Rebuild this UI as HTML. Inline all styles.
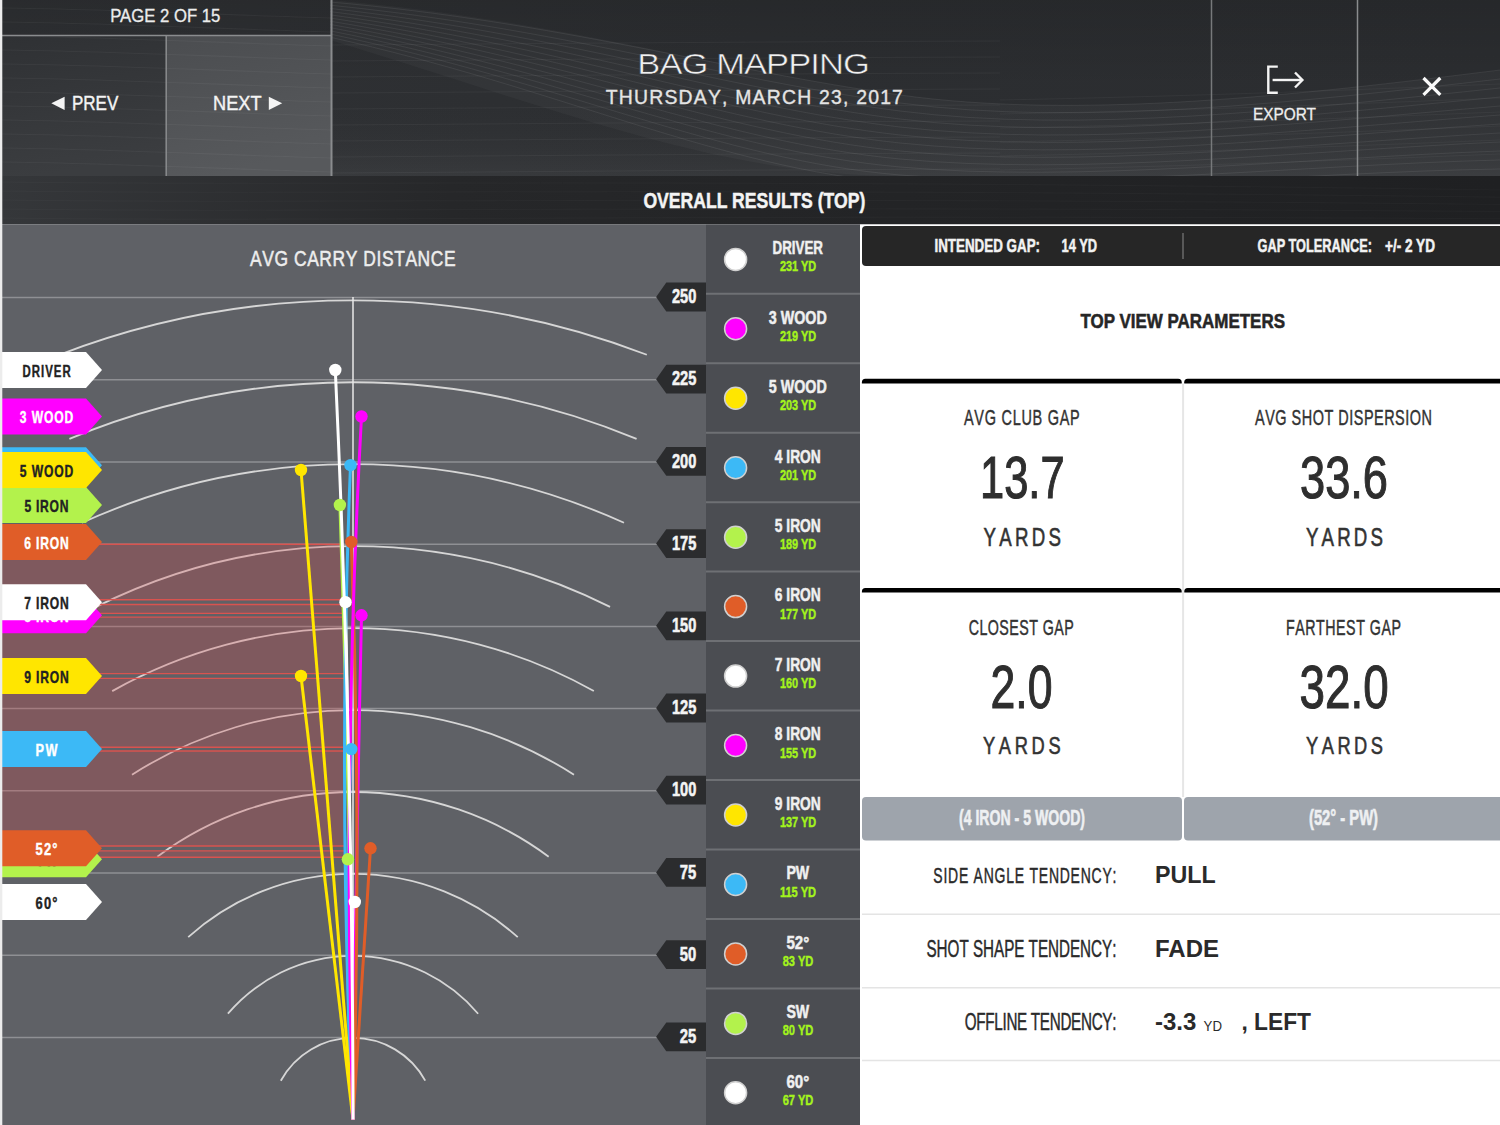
<!DOCTYPE html>
<html><head><meta charset="utf-8"><style>
html,body{margin:0;padding:0;width:1500px;height:1125px;overflow:hidden;background:#fff}
svg{display:block}
</style></head><body>
<svg width="1500" height="1125" viewBox="0 0 1500 1125">
<defs>
<linearGradient id="hdr" x1="0" y1="0" x2="1" y2="0">
<stop offset="0" stop-color="#2f3134"/><stop offset="0.5" stop-color="#2c2e31"/><stop offset="1" stop-color="#2b2d30"/></linearGradient>
<linearGradient id="hdrv" x1="0" y1="0" x2="0" y2="1">
<stop offset="0" stop-color="#000" stop-opacity="0.12"/><stop offset="0.5" stop-color="#000" stop-opacity="0.0"/><stop offset="1" stop-color="#fff" stop-opacity="0.05"/></linearGradient>
<linearGradient id="nextg" x1="0" y1="0" x2="0.3" y2="1">
<stop offset="0" stop-color="#4b4d50"/><stop offset="1" stop-color="#57595c"/></linearGradient>
<linearGradient id="prevg" x1="0" y1="0" x2="0.2" y2="1">
<stop offset="0" stop-color="#2f3134"/><stop offset="1" stop-color="#3b3d40"/></linearGradient>
<linearGradient id="subg" x1="0" y1="0" x2="1" y2="0">
<stop offset="0" stop-color="#35373a"/><stop offset="0.3" stop-color="#262729"/><stop offset="1" stop-color="#1f2022"/></linearGradient>
</defs>
<rect x="0" y="0" width="1500" height="176" fill="url(#hdr)" />
<rect x="0" y="0" width="1500" height="176" fill="url(#hdrv)" />
<path d="M330,0 C560,20 720,70 900,95 S1300,95 1500,70 V176 H900 C720,176 560,110 330,40 Z" fill="#fff" fill-opacity="0.03"/>
<path d="M330,2.0 C560,22.0 720,70.0 900,95.0 S1300,95.0 1500,70.0" fill="none" stroke="#fff" stroke-opacity="0.07" stroke-width="1"/>
<path d="M330,5.2 C560,28.0 720,79.0 900,103.0 S1300,102.0 1500,79.0" fill="none" stroke="#fff" stroke-opacity="0.07" stroke-width="1"/>
<path d="M330,8.4 C560,34.0 720,88.0 900,111.0 S1300,109.0 1500,88.0" fill="none" stroke="#fff" stroke-opacity="0.07" stroke-width="1"/>
<path d="M330,11.6 C560,40.0 720,97.0 900,119.0 S1300,116.0 1500,97.0" fill="none" stroke="#fff" stroke-opacity="0.07" stroke-width="1"/>
<path d="M330,14.8 C560,46.0 720,106.0 900,127.0 S1300,123.0 1500,106.0" fill="none" stroke="#fff" stroke-opacity="0.07" stroke-width="1"/>
<path d="M330,18.0 C560,52.0 720,115.0 900,135.0 S1300,130.0 1500,115.0" fill="none" stroke="#fff" stroke-opacity="0.07" stroke-width="1"/>
<path d="M330,21.2 C560,58.0 720,124.0 900,143.0 S1300,137.0 1500,124.0" fill="none" stroke="#fff" stroke-opacity="0.07" stroke-width="1"/>
<path d="M330,24.4 C560,64.0 720,133.0 900,151.0 S1300,144.0 1500,133.0" fill="none" stroke="#fff" stroke-opacity="0.07" stroke-width="1"/>
<path d="M330,27.6 C560,70.0 720,142.0 900,159.0 S1300,151.0 1500,142.0" fill="none" stroke="#fff" stroke-opacity="0.07" stroke-width="1"/>
<path d="M330,30.8 C560,76.0 720,151.0 900,167.0 S1300,158.0 1500,151.0" fill="none" stroke="#fff" stroke-opacity="0.07" stroke-width="1"/>
<path d="M330,34.0 C560,82.0 720,160.0 900,175.0 S1300,165.0 1500,160.0" fill="none" stroke="#fff" stroke-opacity="0.07" stroke-width="1"/>
<path d="M330,37.2 C560,88.0 720,169.0 900,183.0 S1300,172.0 1500,169.0" fill="none" stroke="#fff" stroke-opacity="0.07" stroke-width="1"/>
<path d="M330,45 C500,44 700,42 1000,41" fill="none" stroke="#fff" stroke-opacity="0.045" stroke-width="1"/>
<path d="M330,61 C500,60 700,58 1000,57" fill="none" stroke="#fff" stroke-opacity="0.045" stroke-width="1"/>
<path d="M330,77 C500,76 700,74 1000,73" fill="none" stroke="#fff" stroke-opacity="0.045" stroke-width="1"/>
<path d="M330,93 C500,92 700,90 1000,89" fill="none" stroke="#fff" stroke-opacity="0.045" stroke-width="1"/>
<path d="M330,109 C500,108 700,106 1000,105" fill="none" stroke="#fff" stroke-opacity="0.045" stroke-width="1"/>
<path d="M330,125 C500,124 700,122 1000,121" fill="none" stroke="#fff" stroke-opacity="0.045" stroke-width="1"/>
<path d="M330,141 C500,140 700,138 1000,137" fill="none" stroke="#fff" stroke-opacity="0.045" stroke-width="1"/>
<path d="M330,157 C500,156 700,154 1000,153" fill="none" stroke="#fff" stroke-opacity="0.045" stroke-width="1"/>
<path d="M330,173 C500,172 700,170 1000,169" fill="none" stroke="#fff" stroke-opacity="0.045" stroke-width="1"/>
<path d="M1000,100 C1200,96 1350,90 1500,84" fill="none" stroke="#fff" stroke-opacity="0.04" stroke-width="1"/>
<path d="M1000,114 C1200,110 1350,104 1500,98" fill="none" stroke="#fff" stroke-opacity="0.04" stroke-width="1"/>
<path d="M1000,128 C1200,124 1350,118 1500,112" fill="none" stroke="#fff" stroke-opacity="0.04" stroke-width="1"/>
<path d="M1000,142 C1200,138 1350,132 1500,126" fill="none" stroke="#fff" stroke-opacity="0.04" stroke-width="1"/>
<path d="M1000,156 C1200,152 1350,146 1500,140" fill="none" stroke="#fff" stroke-opacity="0.04" stroke-width="1"/>
<path d="M1000,170 C1200,166 1350,160 1500,154" fill="none" stroke="#fff" stroke-opacity="0.04" stroke-width="1"/>
<rect x="166" y="36" width="165" height="140" fill="url(#nextg)" />
<rect x="2" y="36" width="164" height="140" fill="url(#prevg)" />
<path d="M2,8 C100,9 200,14 331,18" fill="none" stroke="#fff" stroke-opacity="0.045" stroke-width="1.1"/>
<path d="M2,22 C100,23 200,28 331,32" fill="none" stroke="#fff" stroke-opacity="0.045" stroke-width="1.1"/>
<path d="M2,36 C100,37 200,42 331,46" fill="none" stroke="#fff" stroke-opacity="0.045" stroke-width="1.1"/>
<path d="M2,50 C100,51 200,56 331,60" fill="none" stroke="#fff" stroke-opacity="0.045" stroke-width="1.1"/>
<path d="M2,64 C100,65 200,70 331,74" fill="none" stroke="#fff" stroke-opacity="0.045" stroke-width="1.1"/>
<path d="M2,78 C100,79 200,84 331,88" fill="none" stroke="#fff" stroke-opacity="0.045" stroke-width="1.1"/>
<path d="M2,92 C100,93 200,98 331,102" fill="none" stroke="#fff" stroke-opacity="0.045" stroke-width="1.1"/>
<path d="M2,106 C100,107 200,112 331,116" fill="none" stroke="#fff" stroke-opacity="0.045" stroke-width="1.1"/>
<path d="M2,120 C100,121 200,126 331,130" fill="none" stroke="#fff" stroke-opacity="0.045" stroke-width="1.1"/>
<path d="M2,134 C100,135 200,140 331,144" fill="none" stroke="#fff" stroke-opacity="0.045" stroke-width="1.1"/>
<path d="M2,148 C100,149 200,154 331,158" fill="none" stroke="#fff" stroke-opacity="0.045" stroke-width="1.1"/>
<path d="M2,162 C100,163 200,168 331,172" fill="none" stroke="#fff" stroke-opacity="0.045" stroke-width="1.1"/>
<line x1="2" y1="35.5" x2="332" y2="35.5" stroke="#8a8c8e" stroke-width="1.5" />
<line x1="166.2" y1="36" x2="166.2" y2="176" stroke="#8a8c8e" stroke-width="1.5" />
<line x1="331.5" y1="0" x2="331.5" y2="176" stroke="#8a8c8e" stroke-width="2" />
<line x1="1211.5" y1="0" x2="1211.5" y2="176" stroke="#77797b" stroke-width="1.5" />
<line x1="1357.5" y1="0" x2="1357.5" y2="176" stroke="#8a8c8e" stroke-width="1.5" />
<text x="110.2" y="21.7" font-family="Liberation Sans" font-weight="normal" font-size="17.73" fill="#ececec" textLength="110.1" lengthAdjust="spacingAndGlyphs" stroke="#ececec" stroke-width="0.3">PAGE 2 OF 15</text>
<path d="M51.3,103.3 L64.6,96.7 L64.6,110 Z" fill="#f4f4f4"/>
<text x="72.0" y="110.0" font-family="Liberation Sans" font-weight="normal" font-size="19.33" fill="#f4f4f4" textLength="46.3" lengthAdjust="spacingAndGlyphs" stroke="#f4f4f4" stroke-width="0.4">PREV</text>
<text x="213.0" y="110.0" font-family="Liberation Sans" font-weight="normal" font-size="19.33" fill="#f4f4f4" textLength="48.5" lengthAdjust="spacingAndGlyphs" stroke="#f4f4f4" stroke-width="0.4">NEXT</text>
<path d="M282.2,103.3 L268.8,96.7 L268.8,110 Z" fill="#f4f4f4"/>
<g transform="translate(637.3,74.1) scale(1.2,1)"><text x="0.00 18.43 36.86 58.48 65.71 88.91 107.34 125.77 144.20 151.43 171.45" y="0" font-family="Liberation Sans" font-weight="normal" font-size="28.78" fill="#f0f0f0" stroke="#2c2e31" stroke-width="0.5">BAG MAPPING</text></g>
<g transform="translate(605.8,103.8) scale(0.98,1)"><text x="0.00 13.31 28.83 44.35 59.86 74.29 89.81 104.23 118.66 125.39 132.12 149.83 164.26 179.77 195.29 210.81 217.54 229.77 242.01 248.74 255.47 267.70 279.94 292.17" y="0" font-family="Liberation Sans" font-weight="normal" font-size="19.77" fill="#e4e4e4" stroke="#e4e4e4" stroke-width="0.35">THURSDAY, MARCH 23, 2017</text></g>
<path d="M1277.8,66.6 H1268.3 V92.8 H1277.8" fill="none" stroke="#f4f4f4" stroke-width="2.4"/>
<path d="M1272.6,80 H1302" fill="none" stroke="#f4f4f4" stroke-width="2.4"/>
<path d="M1295,72.5 L1302.4,80 L1295,87.5" fill="none" stroke="#f4f4f4" stroke-width="2.4"/>
<text x="1252.9" y="120.1" font-family="Liberation Sans" font-weight="normal" font-size="16.57" fill="#eeeeee" textLength="63.1" lengthAdjust="spacingAndGlyphs" stroke="#eeeeee" stroke-width="0.3">EXPORT</text>
<path d="M1423.5,78 L1440.3,94.8 M1440.3,78 L1423.5,94.8" stroke="#fafafa" stroke-width="3.2"/>
<rect x="0" y="176" width="1500" height="48.5" fill="url(#subg)" />
<path d="M0,182 C300,186 700,178 1500,190.0" fill="none" stroke="#fff" stroke-opacity="0.025" stroke-width="1"/>
<path d="M0,191 C300,195 700,187 1500,197.2" fill="none" stroke="#fff" stroke-opacity="0.025" stroke-width="1"/>
<path d="M0,200 C300,204 700,196 1500,204.4" fill="none" stroke="#fff" stroke-opacity="0.025" stroke-width="1"/>
<path d="M0,209 C300,213 700,205 1500,211.6" fill="none" stroke="#fff" stroke-opacity="0.025" stroke-width="1"/>
<path d="M0,218 C300,222 700,214 1500,218.8" fill="none" stroke="#fff" stroke-opacity="0.025" stroke-width="1"/>
<text x="643.4" y="207.7" font-family="Liberation Sans" font-weight="bold" font-size="22.67" fill="#f4f4f4" textLength="221.9" lengthAdjust="spacingAndGlyphs" stroke="#f4f4f4" stroke-width="0.5">OVERALL RESULTS (TOP)</text>
<rect x="0" y="224.5" width="706" height="901" fill="#5f6166" />
<line x1="2" y1="1037.3999999999999" x2="660" y2="1037.3999999999999" stroke="#ffffff" stroke-width="1.5" stroke-opacity="0.3"/>
<line x1="2" y1="955.1999999999999" x2="660" y2="955.1999999999999" stroke="#ffffff" stroke-width="1.5" stroke-opacity="0.3"/>
<line x1="2" y1="872.9999999999999" x2="660" y2="872.9999999999999" stroke="#ffffff" stroke-width="1.5" stroke-opacity="0.3"/>
<line x1="2" y1="790.8" x2="660" y2="790.8" stroke="#ffffff" stroke-width="1.5" stroke-opacity="0.3"/>
<line x1="2" y1="708.5999999999999" x2="660" y2="708.5999999999999" stroke="#ffffff" stroke-width="1.5" stroke-opacity="0.3"/>
<line x1="2" y1="626.3999999999999" x2="660" y2="626.3999999999999" stroke="#ffffff" stroke-width="1.5" stroke-opacity="0.3"/>
<line x1="2" y1="544.1999999999999" x2="660" y2="544.1999999999999" stroke="#ffffff" stroke-width="1.5" stroke-opacity="0.3"/>
<line x1="2" y1="461.9999999999999" x2="660" y2="461.9999999999999" stroke="#ffffff" stroke-width="1.5" stroke-opacity="0.3"/>
<line x1="2" y1="379.79999999999984" x2="660" y2="379.79999999999984" stroke="#ffffff" stroke-width="1.5" stroke-opacity="0.3"/>
<line x1="2" y1="297.5999999999999" x2="660" y2="297.5999999999999" stroke="#ffffff" stroke-width="1.5" stroke-opacity="0.3"/>
<path d="M280.8,1080.7 A82.35,82.35 0 0 1 425.23,1080.65" fill="none" stroke="#d6d6d6" stroke-width="1.8"/>
<path d="M227.9,1013.7 A164.30,164.30 0 0 1 478.12,1013.71" fill="none" stroke="#d6d6d6" stroke-width="1.8"/>
<path d="M188.2,937.2 A246.25,246.25 0 0 1 517.77,937.20" fill="none" stroke="#d6d6d6" stroke-width="1.8"/>
<path d="M157.3,856.7 A328.20,328.20 0 0 1 548.68,856.72" fill="none" stroke="#d6d6d6" stroke-width="1.8"/>
<path d="M132.0,774.7 A410.15,410.15 0 0 1 573.98,774.67" fill="none" stroke="#d6d6d6" stroke-width="1.8"/>
<path d="M112.2,691.1 A492.10,492.10 0 0 1 593.83,691.05" fill="none" stroke="#d6d6d6" stroke-width="1.8"/>
<path d="M96.0,606.9 A574.05,574.05 0 0 1 610.04,606.91" fill="none" stroke="#d6d6d6" stroke-width="1.8"/>
<path d="M82.0,522.8 A656.00,656.00 0 0 1 624.00,522.79" fill="none" stroke="#d6d6d6" stroke-width="1.8"/>
<path d="M69.4,438.9 A737.95,737.95 0 0 1 636.59,438.92" fill="none" stroke="#d6d6d6" stroke-width="1.8"/>
<path d="M59.2,354.8 A819.90,819.90 0 0 1 646.83,354.76" fill="none" stroke="#d6d6d6" stroke-width="1.8"/>
<line x1="353" y1="297" x2="353" y2="1119.6" stroke="#e8e8e8" stroke-width="1.5" />
<rect x="2" y="544.2" width="342" height="55.59999999999991" fill="#dc464b" fill-opacity="0.26"/>
<line x1="2" y1="544.2" x2="344" y2="544.2" stroke="#d9534f" stroke-width="1.4" />
<line x1="2" y1="599.8" x2="344" y2="599.8" stroke="#d9534f" stroke-width="1.4" />
<rect x="2" y="604.5" width="342" height="8.899999999999977" fill="#dc464b" fill-opacity="0.26"/>
<line x1="2" y1="604.5" x2="344" y2="604.5" stroke="#d9534f" stroke-width="1.4" />
<line x1="2" y1="613.4" x2="344" y2="613.4" stroke="#d9534f" stroke-width="1.4" />
<rect x="2" y="617.1" width="342" height="56.5" fill="#dc464b" fill-opacity="0.26"/>
<line x1="2" y1="617.1" x2="344" y2="617.1" stroke="#d9534f" stroke-width="1.4" />
<line x1="2" y1="673.6" x2="344" y2="673.6" stroke="#d9534f" stroke-width="1.4" />
<rect x="2" y="678.4" width="342" height="68.80000000000007" fill="#dc464b" fill-opacity="0.26"/>
<line x1="2" y1="678.4" x2="344" y2="678.4" stroke="#d9534f" stroke-width="1.4" />
<line x1="2" y1="747.2" x2="344" y2="747.2" stroke="#d9534f" stroke-width="1.4" />
<rect x="2" y="751.0" width="342" height="95.0" fill="#dc464b" fill-opacity="0.26"/>
<line x1="2" y1="751.0" x2="344" y2="751.0" stroke="#d9534f" stroke-width="1.4" />
<line x1="2" y1="846.0" x2="344" y2="846.0" stroke="#d9534f" stroke-width="1.4" />
<rect x="2" y="850.9" width="342" height="6.399999999999977" fill="#dc464b" fill-opacity="0.26"/>
<line x1="2" y1="850.9" x2="344" y2="850.9" stroke="#d9534f" stroke-width="1.4" />
<line x1="2" y1="857.3" x2="344" y2="857.3" stroke="#d9534f" stroke-width="1.4" />
<g transform="translate(250.0,265.7) scale(0.765,1)"><text x="0.00 15.96 31.93 50.42 57.50 74.72 90.69 107.91 125.13 141.10 148.18 165.40 172.48 188.45 203.13 219.09 236.31 253.54" y="0" font-family="Liberation Sans" font-weight="normal" font-size="22.82" fill="#ededed" stroke="#ededed" stroke-width="0.55">AVG CARRY DISTANCE</text></g>
<path d="M656.1,1036.8 L666.3,1022.4 H706 V1051.2 H666.3 Z" fill="#2b2c2e"/>
<text x="679.8" y="1043.0" font-family="Liberation Sans" font-weight="bold" font-size="19.48" fill="#f4f4f4" textLength="16.5" lengthAdjust="spacingAndGlyphs"  stroke="#f4f4f4" stroke-width="0.55">25</text>
<path d="M656.1,954.6 L666.3,940.2 H706 V969.0 H666.3 Z" fill="#2b2c2e"/>
<text x="679.8" y="960.8" font-family="Liberation Sans" font-weight="bold" font-size="19.48" fill="#f4f4f4" textLength="16.5" lengthAdjust="spacingAndGlyphs"  stroke="#f4f4f4" stroke-width="0.55">50</text>
<path d="M656.1,872.4 L666.3,858.0 H706 V886.8 H666.3 Z" fill="#2b2c2e"/>
<text x="679.8" y="878.6" font-family="Liberation Sans" font-weight="bold" font-size="19.48" fill="#f4f4f4" textLength="16.5" lengthAdjust="spacingAndGlyphs"  stroke="#f4f4f4" stroke-width="0.55">75</text>
<path d="M656.1,790.2 L666.3,775.8 H706 V804.6 H666.3 Z" fill="#2b2c2e"/>
<text x="671.9" y="796.4" font-family="Liberation Sans" font-weight="bold" font-size="19.48" fill="#f4f4f4" textLength="24.4" lengthAdjust="spacingAndGlyphs"  stroke="#f4f4f4" stroke-width="0.55">100</text>
<path d="M656.1,708.0 L666.3,693.6 H706 V722.4 H666.3 Z" fill="#2b2c2e"/>
<text x="671.9" y="714.2" font-family="Liberation Sans" font-weight="bold" font-size="19.48" fill="#f4f4f4" textLength="24.4" lengthAdjust="spacingAndGlyphs"  stroke="#f4f4f4" stroke-width="0.55">125</text>
<path d="M656.1,625.8 L666.3,611.4 H706 V640.2 H666.3 Z" fill="#2b2c2e"/>
<text x="671.9" y="632.0" font-family="Liberation Sans" font-weight="bold" font-size="19.48" fill="#f4f4f4" textLength="24.4" lengthAdjust="spacingAndGlyphs"  stroke="#f4f4f4" stroke-width="0.55">150</text>
<path d="M656.1,543.6 L666.3,529.2 H706 V558.0 H666.3 Z" fill="#2b2c2e"/>
<text x="671.9" y="549.8" font-family="Liberation Sans" font-weight="bold" font-size="19.48" fill="#f4f4f4" textLength="24.4" lengthAdjust="spacingAndGlyphs"  stroke="#f4f4f4" stroke-width="0.55">175</text>
<path d="M656.1,461.4 L666.3,447.0 H706 V475.8 H666.3 Z" fill="#2b2c2e"/>
<text x="671.9" y="467.6" font-family="Liberation Sans" font-weight="bold" font-size="19.48" fill="#f4f4f4" textLength="24.4" lengthAdjust="spacingAndGlyphs"  stroke="#f4f4f4" stroke-width="0.55">200</text>
<path d="M656.1,379.2 L666.3,364.8 H706 V393.6 H666.3 Z" fill="#2b2c2e"/>
<text x="671.9" y="385.4" font-family="Liberation Sans" font-weight="bold" font-size="19.48" fill="#f4f4f4" textLength="24.4" lengthAdjust="spacingAndGlyphs"  stroke="#f4f4f4" stroke-width="0.55">225</text>
<path d="M656.1,297.0 L666.3,282.6 H706 V311.4 H666.3 Z" fill="#2b2c2e"/>
<text x="671.9" y="303.2" font-family="Liberation Sans" font-weight="bold" font-size="19.48" fill="#f4f4f4" textLength="24.4" lengthAdjust="spacingAndGlyphs"  stroke="#f4f4f4" stroke-width="0.55">250</text>
<path d="M353,1119.6 Q353.9,1010.8 354.8,902" fill="none" stroke="#ffffff" stroke-width="3"/>
<path d="M353,1119.6 Q350.45,989.4 347.9,859.3" fill="none" stroke="#b3f24c" stroke-width="3"/>
<path d="M353,1119.6 Q361.75,983.9 370.5,848.3" fill="none" stroke="#e05d28" stroke-width="3"/>
<path d="M353,1119.6 Q342.5,934.3 351.3,749.1" fill="none" stroke="#3cb9f6" stroke-width="3"/>
<path d="M353,1119.6 Q327.0,897.8 301,676" fill="none" stroke="#ffe600" stroke-width="3"/>
<path d="M353,1119.6 Q355.9,867.4 361.5,615.3" fill="none" stroke="#ff00ff" stroke-width="3"/>
<path d="M353,1119.6 Q350.6,860.9 345.5,602.2" fill="none" stroke="#ffffff" stroke-width="3"/>
<path d="M353,1119.6 Q361.8,830.8 351.3,542" fill="none" stroke="#e05d28" stroke-width="3"/>
<path d="M353,1119.6 Q350.5,812.3 339.9,505" fill="none" stroke="#b3f24c" stroke-width="3"/>
<path d="M353,1119.6 Q337.3,792.4 350.5,465.2" fill="none" stroke="#3cb9f6" stroke-width="3"/>
<path d="M353,1119.6 Q327.0,794.8 301,470" fill="none" stroke="#ffe600" stroke-width="3"/>
<path d="M353,1119.6 Q342.3,768.0 361.5,416.5" fill="none" stroke="#ff00ff" stroke-width="3"/>
<path d="M353,1119.6 Q352.7,744.8 335.3,370" fill="none" stroke="#ffffff" stroke-width="3"/>
<circle cx="335.3" cy="370" r="6.2" fill="#ffffff"/>
<circle cx="361.5" cy="416.5" r="6.2" fill="#ff00ff"/>
<circle cx="301" cy="470" r="6.2" fill="#ffe600"/>
<circle cx="350.5" cy="465.2" r="6.2" fill="#3cb9f6"/>
<circle cx="339.9" cy="505" r="6.2" fill="#b3f24c"/>
<circle cx="351.3" cy="542" r="6.2" fill="#e05d28"/>
<circle cx="345.5" cy="602.2" r="6.2" fill="#ffffff"/>
<circle cx="361.5" cy="615.3" r="6.2" fill="#ff00ff"/>
<circle cx="301" cy="676" r="6.2" fill="#ffe600"/>
<circle cx="351.3" cy="749.1" r="6.2" fill="#3cb9f6"/>
<circle cx="370.5" cy="848.3" r="6.2" fill="#e05d28"/>
<circle cx="347.9" cy="859.3" r="6.2" fill="#b3f24c"/>
<circle cx="354.8" cy="902" r="6.2" fill="#ffffff"/>
<path d="M2,884.0 H86 L102,902.0 L86,920.0 H2 Z" fill="#ffffff"/>
<g transform="translate(35.5,908.6) scale(0.8,1)"><text x="0.00 10.52 21.05" y="0" font-family="Liberation Sans" font-weight="bold" font-size="16.13" fill="#222" stroke="#222" stroke-width="0.4">60°</text></g>
<path d="M2,841.3 H86 L102,859.3 L86,877.3 H2 Z" fill="#b3f24c"/>
<g transform="translate(35.5,865.9) scale(0.79,1)"><text x="0.00 12.62" y="0" font-family="Liberation Sans" font-weight="bold" font-size="16.13" fill="#222" stroke="#222" stroke-width="0.4">SW</text></g>
<path d="M2,830.3 H86 L102,848.3 L86,866.3 H2 Z" fill="#e05d28"/>
<g transform="translate(35.5,854.9) scale(0.8,1)"><text x="0.00 10.52 21.05" y="0" font-family="Liberation Sans" font-weight="bold" font-size="16.13" fill="#fff" stroke="#fff" stroke-width="0.4">52°</text></g>
<path d="M2,731.1 H86 L102,749.1 L86,767.1 H2 Z" fill="#3cb9f6"/>
<g transform="translate(35.5,755.7) scale(0.79,1)"><text x="0.00 12.62" y="0" font-family="Liberation Sans" font-weight="bold" font-size="16.13" fill="#fff" stroke="#fff" stroke-width="0.4">PW</text></g>
<path d="M2,658.0 H86 L102,676.0 L86,694.0 H2 Z" fill="#ffe600"/>
<g transform="translate(24.2,682.6) scale(0.75,1)"><text x="0.00 10.08 15.67 21.26 34.02 47.68" y="0" font-family="Liberation Sans" font-weight="bold" font-size="16.13" fill="#222" stroke="#222" stroke-width="0.4">9 IRON</text></g>
<path d="M2,597.3 H86 L102,615.3 L86,633.3 H2 Z" fill="#ff00ff"/>
<g transform="translate(24.2,621.9) scale(0.75,1)"><text x="0.00 10.08 15.67 21.26 34.02 47.68" y="0" font-family="Liberation Sans" font-weight="bold" font-size="16.13" fill="#fff" stroke="#fff" stroke-width="0.4">8 IRON</text></g>
<path d="M2,584.2 H86 L102,602.2 L86,620.2 H2 Z" fill="#ffffff"/>
<g transform="translate(24.2,608.8) scale(0.75,1)"><text x="0.00 10.08 15.67 21.26 34.02 47.68" y="0" font-family="Liberation Sans" font-weight="bold" font-size="16.13" fill="#222" stroke="#222" stroke-width="0.4">7 IRON</text></g>
<path d="M2,524.0 H86 L102,542.0 L86,560.0 H2 Z" fill="#e05d28"/>
<g transform="translate(24.2,548.6) scale(0.75,1)"><text x="0.00 10.08 15.67 21.26 34.02 47.68" y="0" font-family="Liberation Sans" font-weight="bold" font-size="16.13" fill="#fff" stroke="#fff" stroke-width="0.4">6 IRON</text></g>
<path d="M2,487.0 H86 L102,505.0 L86,523.0 H2 Z" fill="#b3f24c"/>
<g transform="translate(24.4,511.6) scale(0.75,1)"><text x="0.00 9.97 15.46 20.94 33.60 47.15" y="0" font-family="Liberation Sans" font-weight="bold" font-size="16.13" fill="#222" stroke="#222" stroke-width="0.4">5 IRON</text></g>
<path d="M2,447.2 H86 L102,465.2 L86,483.2 H2 Z" fill="#3cb9f6"/>
<g transform="translate(24.2,471.8) scale(0.75,1)"><text x="0.00 10.08 15.67 21.26 34.02 47.68" y="0" font-family="Liberation Sans" font-weight="bold" font-size="16.13" fill="#fff" stroke="#fff" stroke-width="0.4">4 IRON</text></g>
<path d="M2,452.0 H86 L102,470.0 L86,488.0 H2 Z" fill="#ffe600"/>
<g transform="translate(19.8,476.6) scale(0.75,1)"><text x="0.00 10.15 15.81 32.22 45.95 59.68" y="0" font-family="Liberation Sans" font-weight="bold" font-size="16.13" fill="#222" stroke="#222" stroke-width="0.4">5 WOOD</text></g>
<path d="M2,398.5 H86 L102,416.5 L86,434.5 H2 Z" fill="#ff00ff"/>
<g transform="translate(19.8,423.1) scale(0.75,1)"><text x="0.00 10.15 15.81 32.22 45.95 59.68" y="0" font-family="Liberation Sans" font-weight="bold" font-size="16.13" fill="#fff" stroke="#fff" stroke-width="0.4">3 WOOD</text></g>
<path d="M2,352.0 H86 L102,370.0 L86,388.0 H2 Z" fill="#ffffff"/>
<g transform="translate(22.4,376.6) scale(0.71,1)"><text x="0.00 13.07 26.13 32.03 44.20 56.38" y="0" font-family="Liberation Sans" font-weight="bold" font-size="16.13" fill="#222" stroke="#222" stroke-width="0.4">DRIVER</text></g>
<rect x="706" y="224.5" width="154" height="901" fill="#4b4d52" />
<line x1="706" y1="293.7" x2="860" y2="293.7" stroke="#6e7074" stroke-width="2" />
<line x1="706" y1="363.18" x2="860" y2="363.18" stroke="#6e7074" stroke-width="2" />
<line x1="706" y1="432.65999999999997" x2="860" y2="432.65999999999997" stroke="#6e7074" stroke-width="2" />
<line x1="706" y1="502.14" x2="860" y2="502.14" stroke="#6e7074" stroke-width="2" />
<line x1="706" y1="571.62" x2="860" y2="571.62" stroke="#6e7074" stroke-width="2" />
<line x1="706" y1="641.1" x2="860" y2="641.1" stroke="#6e7074" stroke-width="2" />
<line x1="706" y1="710.5799999999999" x2="860" y2="710.5799999999999" stroke="#6e7074" stroke-width="2" />
<line x1="706" y1="780.06" x2="860" y2="780.06" stroke="#6e7074" stroke-width="2" />
<line x1="706" y1="849.54" x2="860" y2="849.54" stroke="#6e7074" stroke-width="2" />
<line x1="706" y1="919.02" x2="860" y2="919.02" stroke="#6e7074" stroke-width="2" />
<line x1="706" y1="988.5" x2="860" y2="988.5" stroke="#6e7074" stroke-width="2" />
<line x1="706" y1="1057.98" x2="860" y2="1057.98" stroke="#6e7074" stroke-width="2" />
<circle cx="735.6" cy="259.4" r="11" fill="#ffffff" stroke="#d0d0d0" stroke-width="1.5"/>
<text x="772.6" y="254.2" font-family="Liberation Sans" font-weight="bold" font-size="17.73" fill="#f0f0f0" textLength="50.4" lengthAdjust="spacingAndGlyphs"  stroke="#f0f0f0" stroke-width="0.50">DRIVER</text>
<text x="779.9" y="271.4" font-family="Liberation Sans" font-weight="bold" font-size="14.83" fill="#a4f41c" textLength="36.2" lengthAdjust="spacingAndGlyphs"  stroke="#a4f41c" stroke-width="0.42">231 YD</text>
<circle cx="735.6" cy="328.8" r="11" fill="#ff00ff" stroke="#d0d0d0" stroke-width="1.5"/>
<text x="768.8" y="323.6" font-family="Liberation Sans" font-weight="bold" font-size="17.73" fill="#f0f0f0" textLength="58.0" lengthAdjust="spacingAndGlyphs"  stroke="#f0f0f0" stroke-width="0.50">3 WOOD</text>
<text x="779.9" y="340.8" font-family="Liberation Sans" font-weight="bold" font-size="14.83" fill="#a4f41c" textLength="36.2" lengthAdjust="spacingAndGlyphs"  stroke="#a4f41c" stroke-width="0.42">219 YD</text>
<circle cx="735.6" cy="398.3" r="11" fill="#ffe600" stroke="#d0d0d0" stroke-width="1.5"/>
<text x="768.8" y="393.1" font-family="Liberation Sans" font-weight="bold" font-size="17.73" fill="#f0f0f0" textLength="58.0" lengthAdjust="spacingAndGlyphs"  stroke="#f0f0f0" stroke-width="0.50">5 WOOD</text>
<text x="779.9" y="410.3" font-family="Liberation Sans" font-weight="bold" font-size="14.83" fill="#a4f41c" textLength="36.2" lengthAdjust="spacingAndGlyphs"  stroke="#a4f41c" stroke-width="0.42">203 YD</text>
<circle cx="735.6" cy="467.8" r="11" fill="#3cb9f6" stroke="#d0d0d0" stroke-width="1.5"/>
<text x="774.8" y="462.6" font-family="Liberation Sans" font-weight="bold" font-size="17.73" fill="#f0f0f0" textLength="46.0" lengthAdjust="spacingAndGlyphs"  stroke="#f0f0f0" stroke-width="0.50">4 IRON</text>
<text x="779.9" y="479.8" font-family="Liberation Sans" font-weight="bold" font-size="14.83" fill="#a4f41c" textLength="36.2" lengthAdjust="spacingAndGlyphs"  stroke="#a4f41c" stroke-width="0.42">201 YD</text>
<circle cx="735.6" cy="537.2" r="11" fill="#b3f24c" stroke="#d0d0d0" stroke-width="1.5"/>
<text x="774.8" y="532.0" font-family="Liberation Sans" font-weight="bold" font-size="17.73" fill="#f0f0f0" textLength="46.0" lengthAdjust="spacingAndGlyphs"  stroke="#f0f0f0" stroke-width="0.50">5 IRON</text>
<text x="779.9" y="549.2" font-family="Liberation Sans" font-weight="bold" font-size="14.83" fill="#a4f41c" textLength="36.2" lengthAdjust="spacingAndGlyphs"  stroke="#a4f41c" stroke-width="0.42">189 YD</text>
<circle cx="735.6" cy="606.6" r="11" fill="#e05d28" stroke="#d0d0d0" stroke-width="1.5"/>
<text x="774.8" y="601.4" font-family="Liberation Sans" font-weight="bold" font-size="17.73" fill="#f0f0f0" textLength="46.0" lengthAdjust="spacingAndGlyphs"  stroke="#f0f0f0" stroke-width="0.50">6 IRON</text>
<text x="779.9" y="618.6" font-family="Liberation Sans" font-weight="bold" font-size="14.83" fill="#a4f41c" textLength="36.2" lengthAdjust="spacingAndGlyphs"  stroke="#a4f41c" stroke-width="0.42">177 YD</text>
<circle cx="735.6" cy="676.1" r="11" fill="#ffffff" stroke="#d0d0d0" stroke-width="1.5"/>
<text x="774.8" y="670.9" font-family="Liberation Sans" font-weight="bold" font-size="17.73" fill="#f0f0f0" textLength="46.0" lengthAdjust="spacingAndGlyphs"  stroke="#f0f0f0" stroke-width="0.50">7 IRON</text>
<text x="779.9" y="688.1" font-family="Liberation Sans" font-weight="bold" font-size="14.83" fill="#a4f41c" textLength="36.2" lengthAdjust="spacingAndGlyphs"  stroke="#a4f41c" stroke-width="0.42">160 YD</text>
<circle cx="735.6" cy="745.5" r="11" fill="#ff00ff" stroke="#d0d0d0" stroke-width="1.5"/>
<text x="774.8" y="740.3" font-family="Liberation Sans" font-weight="bold" font-size="17.73" fill="#f0f0f0" textLength="46.0" lengthAdjust="spacingAndGlyphs"  stroke="#f0f0f0" stroke-width="0.50">8 IRON</text>
<text x="779.9" y="757.5" font-family="Liberation Sans" font-weight="bold" font-size="14.83" fill="#a4f41c" textLength="36.2" lengthAdjust="spacingAndGlyphs"  stroke="#a4f41c" stroke-width="0.42">155 YD</text>
<circle cx="735.6" cy="815.0" r="11" fill="#ffe600" stroke="#d0d0d0" stroke-width="1.5"/>
<text x="774.8" y="809.8" font-family="Liberation Sans" font-weight="bold" font-size="17.73" fill="#f0f0f0" textLength="46.0" lengthAdjust="spacingAndGlyphs"  stroke="#f0f0f0" stroke-width="0.50">9 IRON</text>
<text x="779.9" y="827.0" font-family="Liberation Sans" font-weight="bold" font-size="14.83" fill="#a4f41c" textLength="36.2" lengthAdjust="spacingAndGlyphs"  stroke="#a4f41c" stroke-width="0.42">137 YD</text>
<circle cx="735.6" cy="884.5" r="11" fill="#3cb9f6" stroke="#d0d0d0" stroke-width="1.5"/>
<text x="786.4" y="879.2" font-family="Liberation Sans" font-weight="bold" font-size="17.73" fill="#f0f0f0" textLength="22.8" lengthAdjust="spacingAndGlyphs"  stroke="#f0f0f0" stroke-width="0.50">PW</text>
<text x="779.9" y="896.5" font-family="Liberation Sans" font-weight="bold" font-size="14.83" fill="#a4f41c" textLength="36.2" lengthAdjust="spacingAndGlyphs"  stroke="#a4f41c" stroke-width="0.42">115 YD</text>
<circle cx="735.6" cy="953.9" r="11" fill="#e05d28" stroke="#d0d0d0" stroke-width="1.5"/>
<text x="786.4" y="948.7" font-family="Liberation Sans" font-weight="bold" font-size="17.73" fill="#f0f0f0" textLength="22.8" lengthAdjust="spacingAndGlyphs"  stroke="#f0f0f0" stroke-width="0.50">52°</text>
<text x="782.7" y="965.9" font-family="Liberation Sans" font-weight="bold" font-size="14.83" fill="#a4f41c" textLength="30.6" lengthAdjust="spacingAndGlyphs"  stroke="#a4f41c" stroke-width="0.42">83 YD</text>
<circle cx="735.6" cy="1023.4" r="11" fill="#b3f24c" stroke="#d0d0d0" stroke-width="1.5"/>
<text x="786.4" y="1018.1" font-family="Liberation Sans" font-weight="bold" font-size="17.73" fill="#f0f0f0" textLength="22.8" lengthAdjust="spacingAndGlyphs"  stroke="#f0f0f0" stroke-width="0.50">SW</text>
<text x="782.7" y="1035.3" font-family="Liberation Sans" font-weight="bold" font-size="14.83" fill="#a4f41c" textLength="30.6" lengthAdjust="spacingAndGlyphs"  stroke="#a4f41c" stroke-width="0.42">80 YD</text>
<circle cx="735.6" cy="1092.8" r="11" fill="#ffffff" stroke="#d0d0d0" stroke-width="1.5"/>
<text x="786.4" y="1087.6" font-family="Liberation Sans" font-weight="bold" font-size="17.73" fill="#f0f0f0" textLength="22.8" lengthAdjust="spacingAndGlyphs"  stroke="#f0f0f0" stroke-width="0.50">60°</text>
<text x="782.7" y="1104.8" font-family="Liberation Sans" font-weight="bold" font-size="14.83" fill="#a4f41c" textLength="30.6" lengthAdjust="spacingAndGlyphs"  stroke="#a4f41c" stroke-width="0.42">67 YD</text>
<rect x="860" y="224.5" width="640" height="901" fill="#ffffff" />
<path d="M866,226 H1500 V266 H866 Q862,266 862,262 V230 Q862,226 866,226 Z" fill="#262626"/>
<line x1="1183" y1="233" x2="1183" y2="259" stroke="#6a6a6a" stroke-width="1.5" />
<text x="934.5" y="251.8" font-family="Liberation Sans" font-weight="bold" font-size="18.90" fill="#f2f2f2" textLength="105.5" lengthAdjust="spacingAndGlyphs"  stroke="#f2f2f2" stroke-width="0.53">INTENDED GAP:</text>
<text x="1061.5" y="251.8" font-family="Liberation Sans" font-weight="bold" font-size="18.90" fill="#f2f2f2" textLength="35.5" lengthAdjust="spacingAndGlyphs"  stroke="#f2f2f2" stroke-width="0.53">14 YD</text>
<text x="1257.5" y="251.8" font-family="Liberation Sans" font-weight="bold" font-size="18.90" fill="#f2f2f2" textLength="114.5" lengthAdjust="spacingAndGlyphs"  stroke="#f2f2f2" stroke-width="0.53">GAP TOLERANCE:</text>
<text x="1385.0" y="251.8" font-family="Liberation Sans" font-weight="bold" font-size="18.90" fill="#f2f2f2" textLength="50.0" lengthAdjust="spacingAndGlyphs"  stroke="#f2f2f2" stroke-width="0.53">+/- 2 YD</text>
<text x="1080.5" y="327.6" font-family="Liberation Sans" font-weight="bold" font-size="20.93" fill="#262626" textLength="204.5" lengthAdjust="spacingAndGlyphs"  stroke="#262626" stroke-width="0.59">TOP VIEW PARAMETERS</text>
<path d="M861.9,383.6 V382.3 Q861.9,378.8 865.4,378.8 H1178.2 Q1181.7,378.8 1181.7,382.3 V383.6 Z" fill="#000"/>
<path d="M1184.2,383.6 V382.3 Q1184.2,378.8 1187.7,378.8 H1500.5 Q1504,378.8 1504,382.3 V383.6 Z" fill="#000"/>
<path d="M861.9,592.6 V591.5 Q861.9,588 865.4,588 H1178.2 Q1181.7,588 1181.7,591.5 V592.6 Z" fill="#000"/>
<path d="M1184.2,592.6 V591.5 Q1184.2,588 1187.7,588 H1500.5 Q1504,588 1504,591.5 V592.6 Z" fill="#000"/>
<line x1="1183.1" y1="383.6" x2="1183.1" y2="797" stroke="#e6e6e6" stroke-width="2" />
<g transform="translate(964.0,424.6) scale(0.655,1)"><text x="0.00 15.84 31.68 49.96 57.20 74.26 87.65 104.70 120.54 127.78 146.07 161.90" y="0" font-family="Liberation Sans" font-weight="normal" font-size="22.09" fill="#333" stroke="#333" stroke-width="0.45">AVG CLUB GAP</text></g>
<text x="980.0" y="498.0" font-family="Liberation Sans" font-weight="normal" font-size="58.87" fill="#2e2e2e" textLength="84.6" lengthAdjust="spacingAndGlyphs" stroke="#2e2e2e" stroke-width="1.1">13.7</text>
<g transform="translate(983.5,546.0) scale(0.74,1)"><text x="0.00 21.27 42.54 65.20 87.86" y="0" font-family="Liberation Sans" font-weight="normal" font-size="25.29" fill="#333" stroke="#333" stroke-width="0.6">YARDS</text></g>
<g transform="translate(1255.0,424.6) scale(0.655,1)"><text x="0.00 15.50 30.99 48.93 55.83 71.32 88.04 105.98 120.23 127.13 143.84 150.74 166.24 181.73 197.23 213.94 229.43 236.33 254.27" y="0" font-family="Liberation Sans" font-weight="normal" font-size="22.09" fill="#333" stroke="#333" stroke-width="0.45">AVG SHOT DISPERSION</text></g>
<text x="1300.0" y="498.0" font-family="Liberation Sans" font-weight="normal" font-size="58.87" fill="#2e2e2e" textLength="88.0" lengthAdjust="spacingAndGlyphs" stroke="#2e2e2e" stroke-width="1.1">33.6</text>
<g transform="translate(1306.0,546.0) scale(0.74,1)"><text x="0.00 21.10 42.20 64.69 87.18" y="0" font-family="Liberation Sans" font-weight="normal" font-size="25.29" fill="#333" stroke="#333" stroke-width="0.6">YARDS</text></g>
<g transform="translate(968.7,634.7) scale(0.655,1)"><text x="0.00 16.40 29.19 46.80 62.00 77.21 92.41 106.38 113.10 130.71 145.92" y="0" font-family="Liberation Sans" font-weight="normal" font-size="21.80" fill="#333" stroke="#333" stroke-width="0.45">CLOSEST GAP</text></g>
<text x="990.5" y="708.4" font-family="Liberation Sans" font-weight="normal" font-size="60.17" fill="#2e2e2e" textLength="62.0" lengthAdjust="spacingAndGlyphs" stroke="#2e2e2e" stroke-width="1.1">2.0</text>
<g transform="translate(983.0,754.4) scale(0.74,1)"><text x="0.00 21.45 42.90 65.71 88.52" y="0" font-family="Liberation Sans" font-weight="normal" font-size="24.71" fill="#333" stroke="#333" stroke-width="0.6">YARDS</text></g>
<g transform="translate(1286.0,634.7) scale(0.655,1)"><text x="0.00 14.08 29.39 45.90 59.98 76.49 91.79 107.10 121.18 128.00 145.72 161.03" y="0" font-family="Liberation Sans" font-weight="normal" font-size="21.80" fill="#333" stroke="#333" stroke-width="0.45">FARTHEST GAP</text></g>
<text x="1299.5" y="708.4" font-family="Liberation Sans" font-weight="normal" font-size="60.17" fill="#2e2e2e" textLength="89.1" lengthAdjust="spacingAndGlyphs" stroke="#2e2e2e" stroke-width="1.1">32.0</text>
<g transform="translate(1306.0,754.4) scale(0.74,1)"><text x="0.00 21.21 42.42 65.00 87.57" y="0" font-family="Liberation Sans" font-weight="normal" font-size="24.71" fill="#333" stroke="#333" stroke-width="0.6">YARDS</text></g>
<rect x="862" y="797" width="320" height="43.6" rx="4" fill="#9ea4ac"/>
<rect x="1184" y="797" width="320" height="43.6" rx="4" fill="#9ea4ac"/>
<text x="959.0" y="824.6" font-family="Liberation Sans" font-weight="bold" font-size="21.22" fill="#eef0f2" textLength="126.0" lengthAdjust="spacingAndGlyphs"  stroke="#eef0f2" stroke-width="0.59">(4 IRON - 5 WOOD)</text>
<text x="1309.0" y="824.6" font-family="Liberation Sans" font-weight="bold" font-size="21.22" fill="#eef0f2" textLength="69.0" lengthAdjust="spacingAndGlyphs"  stroke="#eef0f2" stroke-width="0.59">(52° - PW)</text>
<g transform="translate(933.3,882.7) scale(0.655,1)"><text x="0.00 15.40 22.49 39.08 54.48 61.57 76.97 93.56 111.33 124.36 139.77 146.86 161.06 176.46 193.05 209.63 225.04 241.62 258.20 273.61" y="0" font-family="Liberation Sans" font-weight="normal" font-size="21.37" fill="#2a2a2a" stroke="#2a2a2a" stroke-width="0.45">SIDE ANGLE TENDENCY:</text></g>
<text x="1155.0" y="882.7" font-family="Liberation Sans" font-weight="bold" font-size="24.56" fill="#2a2a2a" textLength="60.7" lengthAdjust="spacingAndGlyphs" >PULL</text>
<line x1="862" y1="914.2" x2="1500" y2="914.2" stroke="#e4e4e4" stroke-width="1.5" />
<g transform="translate(926.5,956.8) scale(0.655,1)"><text x="0.00 15.47 32.22 50.27 64.43 70.84 86.31 103.06 118.53 134.00 149.47 155.89 170.05 185.52 202.27 219.02 234.49 251.24 267.99 283.46" y="0" font-family="Liberation Sans" font-weight="normal" font-size="23.26" fill="#2a2a2a" stroke="#2a2a2a" stroke-width="0.45">SHOT SHAPE TENDENCY:</text></g>
<text x="1155.0" y="956.8" font-family="Liberation Sans" font-weight="bold" font-size="24.42" fill="#2a2a2a" textLength="64.0" lengthAdjust="spacingAndGlyphs" >FADE</text>
<line x1="862" y1="987.8" x2="1500" y2="987.8" stroke="#e4e4e4" stroke-width="1.5" />
<g transform="translate(964.8,1029.5) scale(0.655,1)"><text x="0.00 17.61 31.34 45.07 57.53 63.52 79.84 94.88 100.86 114.59 129.63 145.95 162.27 177.31 193.63 209.95 224.99" y="0" font-family="Liberation Sans" font-weight="normal" font-size="23.26" fill="#2a2a2a" stroke="#2a2a2a" stroke-width="0.45">OFFLINE TENDENCY:</text></g>
<text x="1155.0" y="1029.5" font-family="Liberation Sans" font-weight="bold" font-size="23.98" fill="#2a2a2a" textLength="41.3" lengthAdjust="spacingAndGlyphs" >-3.3</text>
<text x="1203.6" y="1031.0" font-family="Liberation Sans" font-weight="normal" font-size="13.81" fill="#2a2a2a" textLength="18.4" lengthAdjust="spacingAndGlyphs" >YD</text>
<text x="1241.4" y="1029.5" font-family="Liberation Sans" font-weight="bold" font-size="24.71" fill="#2a2a2a" textLength="69.6" lengthAdjust="spacingAndGlyphs" >, LEFT</text>
<line x1="862" y1="1060.5" x2="1500" y2="1060.5" stroke="#e4e4e4" stroke-width="1.5" />
<rect x="0" y="0" width="2.3" height="1125" fill="#ececec" />
</svg>
</body></html>
